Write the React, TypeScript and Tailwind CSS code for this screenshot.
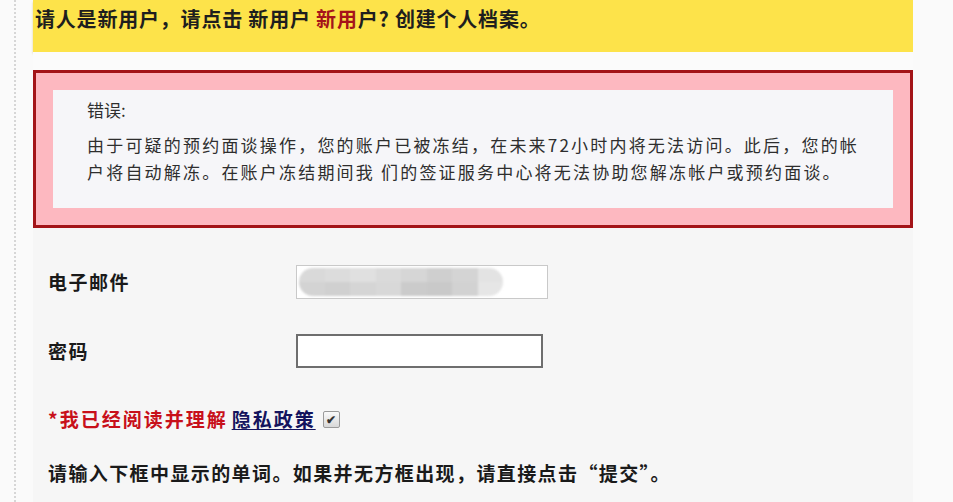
import React from "react";

const cjk = '"Noto Sans CJK SC", "Noto Sans", sans-serif';

export default function App() {
  const blurShades = ["#d9d9d9", "#dcdcdc", "#e0e0e0", "#dadada", "#d6d6d6", "#cfcfcf", "#d4d4d4", "#e3e3e3"];
  const blurShades2 = ["#d3d3d3", "#d0d0d0", "#d5d5d5", "#d8d8d8", "#cbcbcb", "#c9c9c9", "#d2d2d2", "#e6e6e6"];
  return (
    <div
      className="w-[953px] h-[502px] bg-[#f6f6f6] flex overflow-hidden text-[#222]"
      style={{ fontFamily: cjk }}
    >
      <div className="w-[33px] shrink-0 bg-[#fafafa] flex">
        <div className="w-[14px]" />
        <div className="w-[3px] border-l-2 border-dotted border-[#d6d6d6]" />
      </div>
      <div className="w-[880px] shrink-0 flex flex-col">
        <div className="h-[52px] bg-[#fde34a] shadow-[0_2px_2px_rgba(200,170,40,0.45)] pl-[2px] pt-[5px] text-[20px] font-bold leading-[28px] tracking-[0.8px] text-[#1e1e1e]">
          请人是新用户，请点击 新用户 <span className="text-[#a5141a]">新用</span>户? 创建个人档案。
        </div>
        <div className="h-[18px] bg-[#fbfbfb]" />
        <div className="h-[158px] border-[3px] border-[#a31418] bg-[#fdb8c0] p-[17px]">
          <div className="h-full bg-[#f6f6f9] pl-[34px] pt-[6px] text-[17px] text-[#2e2e2e] leading-[27px]">
            <div className="mb-[8px]">错误:</div>
            <div className="tracking-[2.2px]">
              由于可疑的预约面谈操作，您的账户已被冻结，在未来72小时内将无法访问。此后，您的帐
              <br />
              户将自动解冻。在账户冻结期间我 们的签证服务中心将无法协助您解冻帐户或预约面谈。
            </div>
          </div>
        </div>
        <div className="pl-[15px] pt-[37px] flex flex-col">
          <div className="flex items-center h-[34px]">
            <div className="w-[248px] text-[19px] font-bold tracking-[1.5px] text-[#1a1a1a]">电子邮件</div>
            <div className="w-[252px] h-[34px] border border-[#c9c9c9] bg-white flex items-center pl-[2px]">
              <div className="flex flex-col w-[204px] h-[28px] rounded-full overflow-hidden blur-[1px]">
                <div className="flex flex-1">
                  {blurShades.map((c, i) => (
                    <div key={i} className="flex-1" style={{ background: c }} />
                  ))}
                </div>
                <div className="flex flex-1">
                  {blurShades2.map((c, i) => (
                    <div key={i} className="flex-1" style={{ background: c }} />
                  ))}
                </div>
              </div>
            </div>
          </div>
          <div className="flex items-center h-[34px] mt-[35px]">
            <div className="w-[248px] text-[19px] font-bold tracking-[1.5px] text-[#1a1a1a]">密码</div>
            <div className="w-[247px] h-[34px] border-2 border-[#6e6e6e] bg-white" />
          </div>
          <div className="flex items-center mt-[36px] h-[30px] text-[19px] font-bold tracking-[2px]">
            <span className="text-[#c8101a]">*我已经阅读并理解</span>
            <span className="ml-[4px] text-[#14145e] underline underline-offset-2">隐私政策</span>
            <span className="ml-[7px] w-[17px] h-[17px] border border-[#9a9a9a] rounded-[2px] bg-gradient-to-b from-[#fafafa] to-[#d8d8d8] flex items-center justify-center text-[12px] leading-none tracking-normal text-[#333]">
              ✔
            </span>
          </div>
          <div className="mt-[25px] text-[19px] font-bold tracking-[1.4px] text-[#1a1a1a]">
            请输入下框中显示的单词。如果并无方框出现，请直接点击“提交”。
          </div>
        </div>
      </div>
      <div className="flex-1 bg-[#fafafa]" />
    </div>
  );
}
